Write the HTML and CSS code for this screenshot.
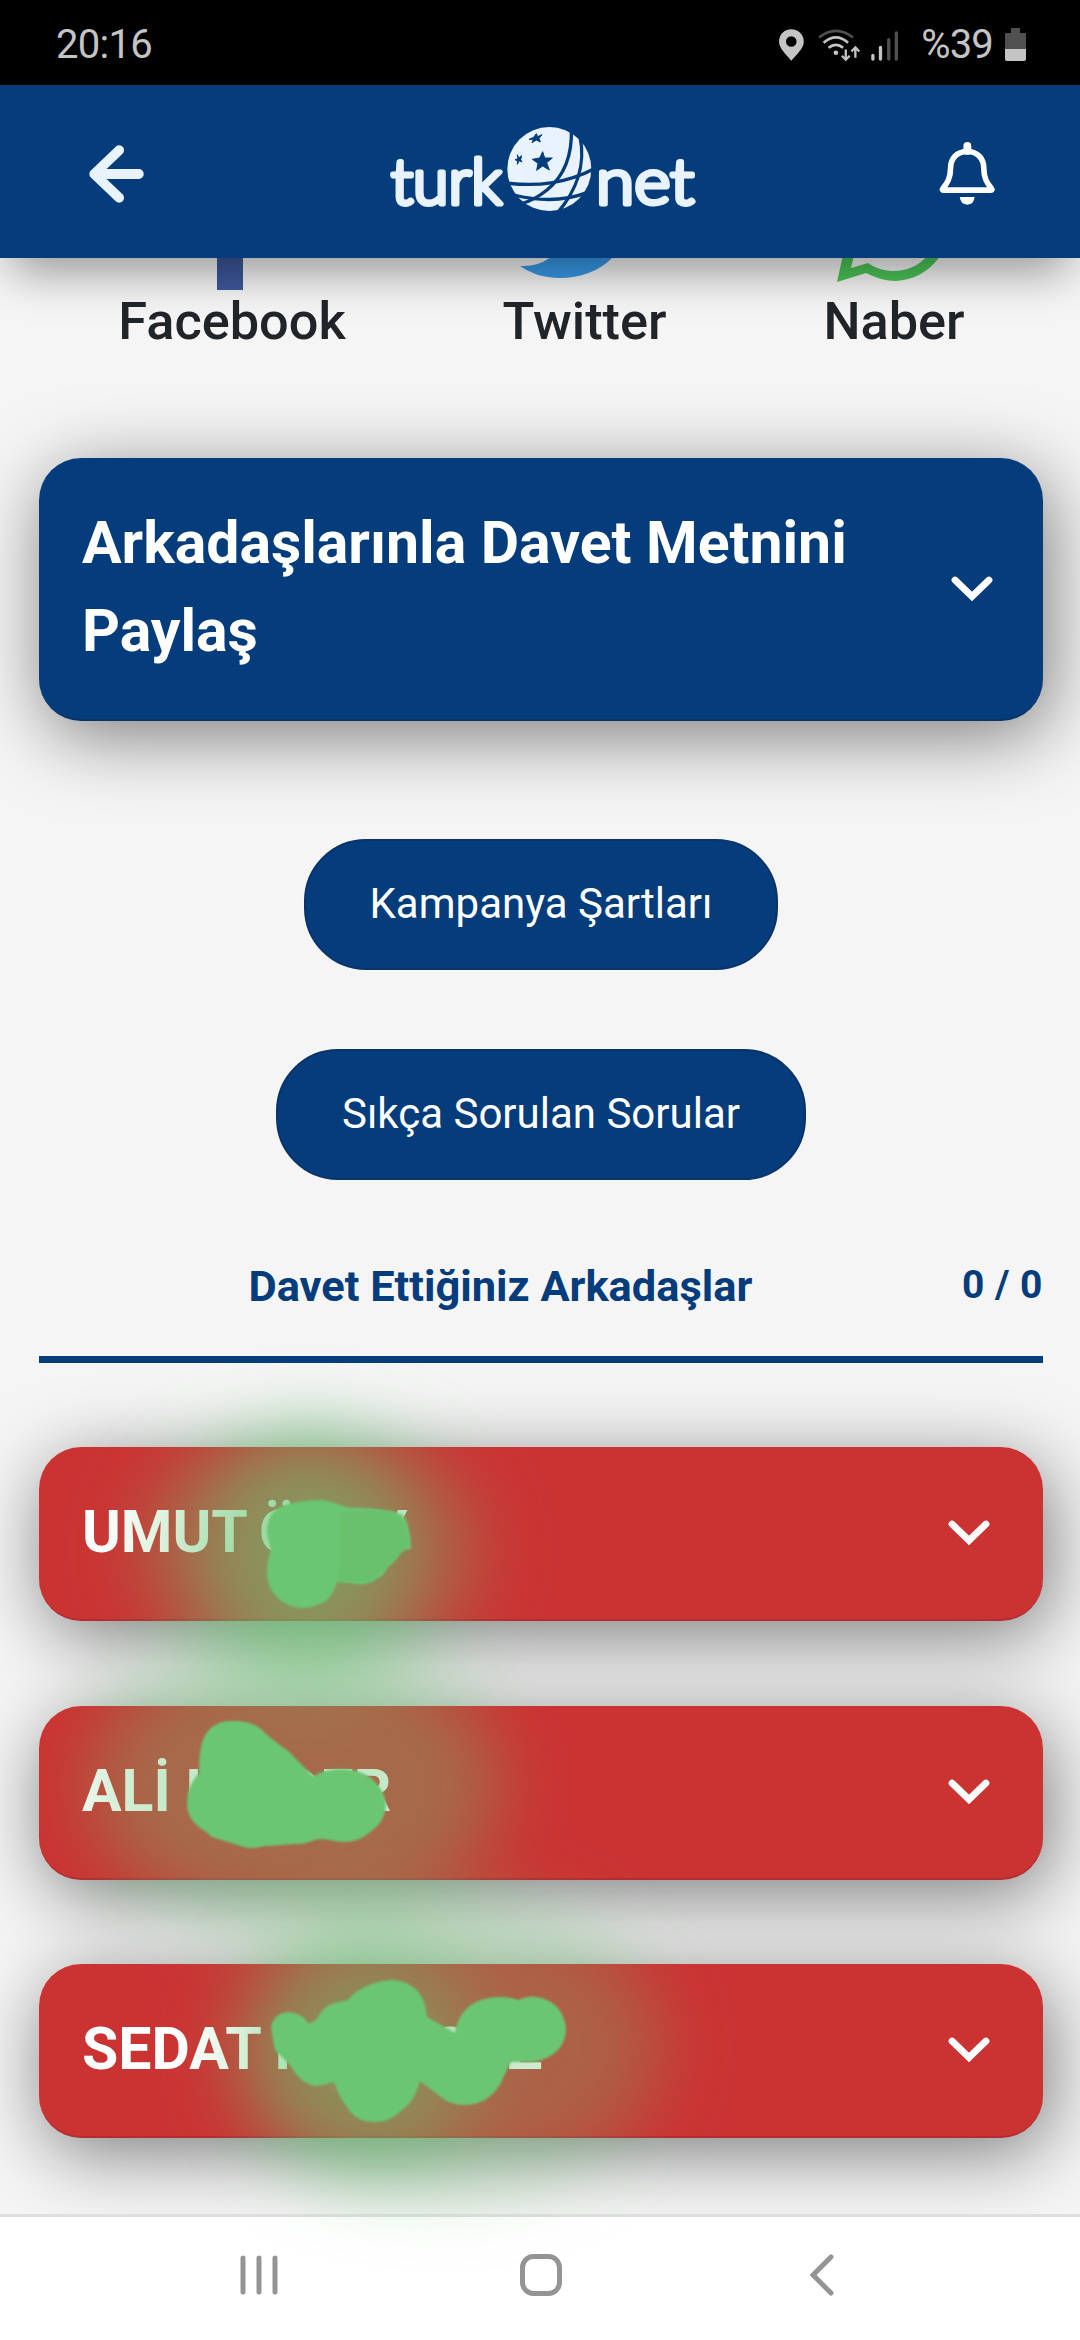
FILE: index.html
```html
<!DOCTYPE html>
<html lang="tr">
<head>
<meta charset="utf-8">
<title>TurkNet</title>
<link rel="stylesheet" href="styles.css">
</head>
<body>
<div class="screen">
  <div class="status">
    <span class="clock">20:16</span>
    <div class="status-right">
      <svg class="status-icons" viewBox="100 70 400 115">
        <path fill="#c4c4c4" fill-rule="evenodd" d="M151 80C130 80 114 96 114 117C114 139 137 157 151 175C166 157 189 139 189 117C189 96 172 80 151 80ZM151 101A16 16 0 1 1 151 133A16 16 0 1 1 151 101Z"/>
        <g fill="none" stroke="#c4c4c4" stroke-width="8">
          <path stroke="#505050" d="M235 105Q286 65 338 105"/>
          <path d="M249 121Q286 88 323 121M264 136Q286 118 308 136"/>
          <path stroke-width="7" d="M316 141V170M304 160L316 172L328 160M345 166V137M333 147L345 135L357 147"/>
        </g>
        <circle cx="286" cy="151" r="7" fill="#c4c4c4"/>
        <g stroke-width="10" stroke-linecap="round">
          <path stroke="#c4c4c4" d="M398 159V170M421 135V170"/>
          <path stroke="#505050" d="M446 111V170M469 91V170"/>
        </g>
      </svg>
      <span class="percent">%39</span>
      <svg class="battery" viewBox="0 0 21 33"><path fill="#505050" d="M6 0H15V5H20Q21 5 21 6V21H0V6Q0 5 1 5H6Z"/><path fill="#c4c4c4" d="M0 21H21V31Q21 33 19 33H2Q0 33 0 31Z"/></svg>
    </div>
  </div>

  <header class="topbar">
    <svg class="back" viewBox="0 0 56 56"><path d="M32 5L8 28L32 51M8 28H51" fill="none" stroke="#e8f3ff" stroke-width="9.5" stroke-linecap="round" stroke-linejoin="round"/></svg>
    <svg class="logo" viewBox="0 0 340 140">
      <g class="wordmark">
        <text x="19" y="104" textLength="111" lengthAdjust="spacingAndGlyphs">turk</text>
        <text x="224" y="104" textLength="98" lengthAdjust="spacingAndGlyphs">net</text>
      </g>
      <g transform="scale(.33333)">
        <circle cx="532" cy="207" r="126" fill="#e8f3ff"/>
        <g fill="none" stroke="#053c7b" stroke-width="10">
          <path d="M598 85C601 160 580 225 525 270C495 294 470 306 445 312"/>
          <path d="M624 110C642 195 612 275 555 340"/>
          <path d="M402 249C495 260 580 252 670 205"/>
          <path d="M425 285C495 302 575 305 645 278"/>
        </g>
        <path fill="#053c7b" stroke="#053c7b" stroke-width="3" stroke-linejoin="round" d="M512 155L518 174L541 174L524 188L532 210L512 198L494 211L498 190L481 178L503 174ZM493 101L497 110L510 104L501 115L505 126L493 120L480 128L484 118L471 118L485 112ZM436 164L441 174L449 167L446 179L450 186L442 182L436 193L437 183L429 179L438 176Z"/>
      </g>
    </svg>
    <svg class="bell" viewBox="595 425 171 200">
      <path d="M680 457C648 457 629 478 629 508C629 540 618 553 606 569Q602 574 608 574H751Q757 574 753 569C741 553 730 540 730 508C730 478 711 457 680 457Z" fill="none" stroke="#fff" stroke-width="17" stroke-linejoin="round"/>
      <path d="M680 440V455" stroke="#fff" stroke-width="24" stroke-linecap="round"/>
      <path d="M657 595H702Q700 618 680 618Q660 618 657 595Z" fill="#fff"/>
    </svg>
  </header>

  <main class="content">
    <div class="share">
      <div class="share-item facebook">
        <svg viewBox="118 258 228 33"><path fill="#3d589c" d="M217 240H243V290H217Z"/></svg>
        <span>Facebook</span>
      </div>
      <div class="share-item twitter">
        <svg viewBox="502 258 165 33"><path fill="#389aea" d="M520 266Q538 267 551 257H613C600 271 580 278 560 278C543 278 530 273 520 266Z"/></svg>
        <span>Twitter</span>
      </div>
      <div class="share-item whatsapp">
        <svg viewBox="823 258 142 33"><path fill="#4bc557" d="M843 255L837 282L866 273C876 278 886 281 896 281C914 280 929 272 941 255H928C919 266 907 271 893 271C882 271 874 267 868 263L851 268L854 255Z"/></svg>
        <span>Naber</span>
      </div>
    </div>

    <section class="card invite">
      <h2>Arkadaşlarınla Davet Metnini Paylaş</h2>
      <svg class="chevron" viewBox="0 0 42 26"><path d="M4 4L21 20.5L38 4"/></svg>
    </section>

    <div class="buttons">
      <button class="pill terms">Kampanya Şartları</button>
      <button class="pill faq">Sıkça Sorulan Sorular</button>
    </div>

    <div class="summary">
      <h3>Davet Ettiğiniz Arkadaşlar</h3>
      <span class="count">0 / 0</span>
    </div>

    <div class="friends">
      <section class="card friend umut">
        <h2><span>UMUT</span><span>Ö</span><span>Y</span></h2>
        <svg class="chevron" viewBox="0 0 42 26"><path d="M4 4L21 20.5L38 4"/></svg>
      </section>
      <section class="card friend ali">
        <h2><span>ALİ</span><span>I</span><span>DER</span></h2>
        <svg class="chevron" viewBox="0 0 42 26"><path d="M4 4L21 20.5L38 4"/></svg>
      </section>
      <section class="card friend sedat">
        <h2><span>SEDAT</span><span>I</span><span>O</span><span>Z</span></h2>
        <svg class="chevron" viewBox="0 0 42 26"><path d="M4 4L21 20.5L38 4"/></svg>
      </section>
    </div>
  </main>

  <nav class="navbar">
    <svg class="recents" viewBox="0 0 38 42"><path d="M3 4V38M19 4V38M35 4V38"/></svg>
    <svg class="home" viewBox="0 0 42 42"><rect x="2.5" y="2.5" width="37" height="37" rx="11"/></svg>
    <svg class="prev" viewBox="0 0 24 42"><path d="M21 3L3 21L21 39"/></svg>
  </nav>

  <svg class="scribble" viewBox="0 0 1080 2340">
    <defs>
      <filter id="glow" x="-100%" y="-100%" width="300%" height="300%"><feGaussianBlur stdDeviation="36"/></filter>
      <filter id="edge"><feGaussianBlur stdDeviation=".8"/></filter>
      <path id="s1" d="M267 1533C267 1517 274 1508 286 1505C298 1501 306 1501 320 1500C336 1501 342 1508 355 1508C370 1508 380 1509 392 1511Q404 1514 406 1520Q411 1532 411 1549L402 1550Q396 1562 388 1567Q383 1577 378 1578Q367 1587 351 1583L337 1582Q333 1595 327 1600Q315 1608 302 1608Q287 1607 278 1598Q267 1588 267 1573Q267 1560 271 1550Z"/>
      <path id="s2" d="M199 1773Q199 1752 202 1743C206 1728 218 1720 233 1721C249 1721 257 1725 264 1732C279 1746 287 1748 295 1758L313 1776Q326 1769 341 1769Q359 1769 371 1778Q385 1790 386 1805Q385 1822 369 1833Q359 1842 343 1842Q332 1841 324 1839C312 1839 308 1844 300 1844C285 1844 275 1846 265 1846Q250 1850 241 1846L212 1837L205 1831Q187 1821 187 1803Q187 1786 199 1773Z"/>
      <path id="s3" d="M271 2028Q273 2013 289 2012Q302 2013 309 2024L317 2019Q325 2003 340 2002L348 2000Q356 1990 367 1986Q379 1980 394 1980Q421 1983 426 2010L427 2017L455 2033C459 2008 476 1998 498 1997Q511 1997 519 2000Q527 1995 537 1997Q563 2002 566 2028C566 2046 555 2058 533 2062L511 2062Q504 2075 501 2083C492 2098 480 2105 464 2105Q451 2105 441 2097L420 2081Q414 2102 402 2110Q389 2123 374 2122Q356 2122 347 2107Q339 2097 334 2082Q325 2085 315 2086Q300 2083 290 2065L275 2050Z"/>
    </defs>
    <g fill="#6ac571" filter="url(#glow)">
      <ellipse cx="310" cy="1550" rx="170" ry="125" opacity=".33"/>
      <ellipse cx="308" cy="1552" rx="105" ry="118" opacity=".5"/>
    </g>
    <g fill="#6ac571" opacity=".38" filter="url(#glow)">
      <ellipse cx="295" cy="1785" rx="205" ry="142"/>
    </g>
    <g fill="#6ac571" filter="url(#glow)">
      <ellipse cx="445" cy="2045" rx="215" ry="148" opacity=".32"/>
      <ellipse cx="362" cy="2060" rx="112" ry="118" opacity=".42"/>
    </g>
    <g fill="#6bc672" filter="url(#edge)"><use href="#s1"/><use href="#s2"/><use href="#s3"/></g>
    <path fill="#67c06b" opacity=".8" filter="url(#edge)" d="M340 1514Q368 1508 392 1513Q409 1524 408 1547L388 1565Q374 1585 352 1582L338 1581Q342 1545 340 1514Z"/>
  </svg>
</div>
</body>
</html>
```
FILE: styles.css
```css
* { box-sizing: border-box; }
body { margin: 0; font-family: Roboto, "Liberation Sans", sans-serif; background: #f5f5f5; }
h2, h3 { margin: 0; }
svg { display: block; flex: none; }

.screen { position: relative; width: 1080px; height: 2340px; display: flex; flex-direction: column; overflow: hidden; }

.status { height: 85px; flex: none; background: #000; color: #c4c4c4; display: flex; align-items: center; justify-content: space-between; padding: 4px 54px 0 56px; font-size: 40px; }
.clock { letter-spacing: -.7px; }
.status-right { display: flex; align-items: center; }
.status-icons { width: 133px; height: 38px; margin-right: 14px; }
.percent { font-size: 40px; letter-spacing: -.8px; margin-right: 12px; }
.battery { width: 21px; height: 33px; }

.topbar { position: relative; z-index: 2; height: 173px; flex: none; background: #053c7b; display: flex; align-items: center; justify-content: space-between; padding: 0 84px 0 86px; box-shadow: 0 25px 44px -12px rgba(0,0,0,.4); }
.back { width: 58px; height: 58px; margin-top: 5px; }
.logo { width: 340px; height: 140px; margin: 0 0 4px 0; }
.wordmark { font-family: Lato, sans-serif; font-weight: 300; font-size: 63px; fill: #e8f3ff; stroke: #e8f3ff; stroke-width: 5px; stroke-linejoin: round; }
.bell { width: 57px; height: 66px; margin-top: 5px; }

.content { position: relative; z-index: 1; isolation: isolate; overflow: hidden; flex: 1; background: #f5f5f5; padding: 0 37px 0 39px; }

.share { height: 93px; display: flex; justify-content: space-between; padding: 0 78px 0 79px; }
.share-item { display: flex; flex-direction: column; align-items: center; font-size: 52.3px; line-height: 60px; font-weight: 500; color: #212529; }
.share-item svg { height: 33px; }
.facebook svg { width: 228px; }
.twitter svg { width: 165px; }
.whatsapp svg { width: 142px; }

.card { position: relative; display: flex; align-items: center; justify-content: space-between; border-radius: 42px; color: #fff; }
.card::before { content: ""; position: absolute; inset: 0; z-index: -1; border-radius: 42px; box-shadow: 6px 16px 76px rgba(0,0,0,.5); }
.card h2 { font-size: 59px; line-height: 88px; font-weight: 700; letter-spacing: -.03px; }
.chevron { width: 42px; height: 26px; }
.chevron path { fill: none; stroke: #fff; stroke-width: 6.8; stroke-linecap: round; }

.invite { height: 263px; margin-top: 107px; padding: 0 50px 4px 43px; background: #053c7b; border-bottom: 2px solid #09346a; }
.invite h2 { width: 800px; }
.invite .chevron { margin-top: 5px; }

.buttons { margin-top: 118px; display: flex; flex-direction: column; align-items: center; gap: 79px; }
.pill { height: 131px; padding: 0 0 2px; border: 2px solid #08346a; border-radius: 62px; background: #053c7b; color: #fff; font: 400 42px Roboto, sans-serif; }
.terms { width: 474px; }
.faq { width: 530px; }

.summary { height: 106px; margin-top: 77px; border-bottom: 7px solid #053c7b; display: flex; color: #053c7b; font-size: 42px; line-height: 60px; font-weight: 700; }
.summary h3 { flex: 1; text-align: center; font-size: 43.4px; font-weight: 700; }
.count { font-size: 39px; line-height: 57px; font-weight: 700; letter-spacing: .5px; }

.friends { margin-top: 84px; display: flex; flex-direction: column; gap: 84.5px; }
.friend { height: 174px; padding: 0 53px 2px 43px; background: #cb3333; border-bottom: 2px solid #b22c30; }
.friend .chevron { margin-top: 2px; }
.friend h2 { display: flex; white-space: nowrap; }
.umut span:nth-child(1) { width: 177px; }
.umut span:nth-child(2) { width: 112px; }
.ali span:nth-child(1) { width: 103px; }
.ali span:nth-child(2) { width: 97px; }
.sedat span:nth-child(1) { width: 192px; }
.sedat span:nth-child(2) { width: 156px; }
.sedat span:nth-child(3) { width: 77px; }

.navbar { height: 126px; flex: none; background: #fff; border-top: 3px solid #dfdfdf; display: flex; align-items: center; justify-content: space-between; padding: 0 246px 8px 240px; }
.navbar svg { fill: none; stroke: #949494; stroke-width: 5; stroke-linecap: round; height: 42px; }
.recents { width: 38px; }
.home { width: 42px; margin-right: 7px; }
.prev { width: 24px; }

.scribble { position: absolute; inset: 0; z-index: 3; width: 1080px; height: 2340px; pointer-events: none; }
```
